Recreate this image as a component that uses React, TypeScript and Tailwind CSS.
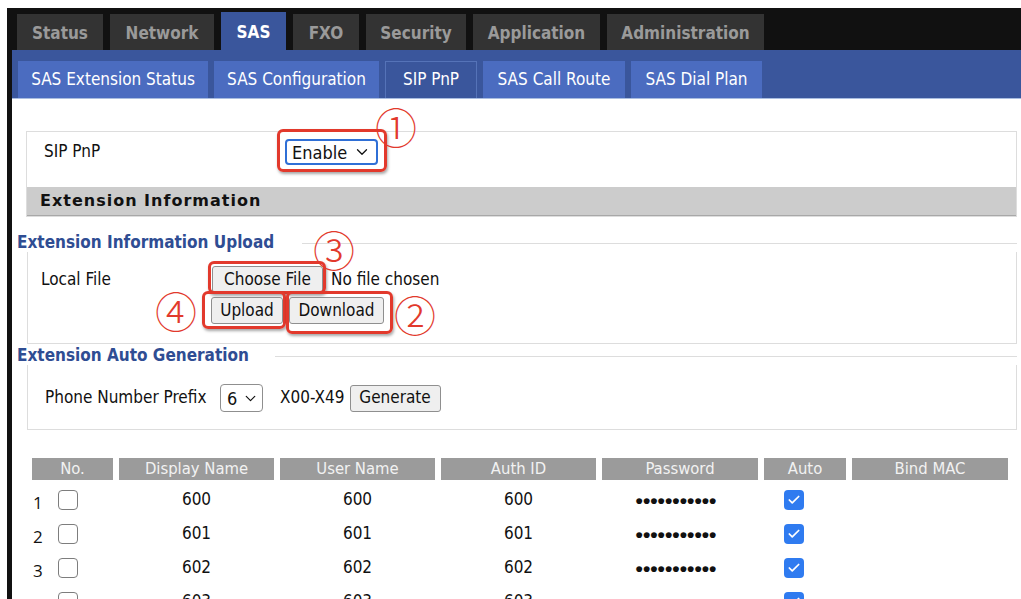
import { ChevronDown, Check } from "lucide-react";

const mainTabs = [
  { label: "Status", w: "w-[86px]" },
  { label: "Network", w: "w-[104px]" },
  { label: "SAS", w: "w-[65px]", active: true },
  { label: "FXO", w: "w-[66px]" },
  { label: "Security", w: "w-[100px]" },
  { label: "Application", w: "w-[127px]" },
  { label: "Administration", w: "w-[157px]" },
];

const subTabs = [
  { label: "SAS Extension Status", w: "w-[190px]" },
  { label: "SAS Configuration", w: "w-[165px]" },
  { label: "SIP PnP", w: "w-[92px]", active: true },
  { label: "SAS Call Route", w: "w-[142px]" },
  { label: "SAS Dial Plan", w: "w-[131px]" },
];

const columns = [
  { label: "No.", w: "w-[81px]" },
  { label: "Display Name", w: "w-[155px]" },
  { label: "User Name", w: "w-[155px]" },
  { label: "Auth ID", w: "w-[155px]" },
  { label: "Password", w: "w-[156px]" },
  { label: "Auto", w: "w-[82px]" },
  { label: "Bind MAC", w: "w-[156px]" },
];

const extensions = ["600", "601", "602", "603"];

const body = "font-['DejaVu_Sans_Condensed','DejaVu_Sans',sans-serif]";

function Marker({ n, className }: { n: string; className: string }) {
  return (
    <span
      className={`absolute leading-none text-[#e2392c] text-[42px] font-['Noto_Sans_CJK_JP',sans-serif] font-light ${className}`}
    >
      {n}
    </span>
  );
}

function Outline({ className }: { className: string }) {
  return (
    <span
      className={`pointer-events-none absolute rounded-[6px] border-[3px] border-[#e2392c] shadow-[1px_2px_3px_rgba(0,0,0,0.35)] ${className}`}
    />
  );
}

function Button({ children, className = "" }: { children: React.ReactNode; className?: string }) {
  return (
    <span
      className={`inline-flex h-[27px] items-center justify-center rounded-[3px] border border-[#8f8f8f] bg-[#efefef] text-[17px] text-[#111] ${className}`}
    >
      {children}
    </span>
  );
}

function SectionTitle({ title, gap }: { title: string; gap: string }) {
  return (
    <div className="flex h-[18px] items-center pl-[5px]">
      <span className={`font-bold text-[17px] text-[#2f4d93] ${gap}`}>{title}</span>
      <span className="h-px flex-1 bg-[#dddddd]" />
    </div>
  );
}

export default function App() {
  return (
    <div className={`h-[599px] w-[1021px] overflow-hidden bg-white pl-[7px] pt-[8px] ${body}`}>
      <div className="h-full bg-[#111111]">
        {/* top navigation */}
        <div className="flex h-[42px] items-end gap-[7px] pl-[10px]">
          {mainTabs.map((t) => (
            <div
              key={t.label}
              className={`flex items-center justify-center pt-[3px] font-bold text-[17px] ${t.w} ${
                t.active ? "h-[38px] bg-[#3a569c] text-white" : "h-[36px] bg-[#333333] text-[#9a9a9a]"
              }`}
            >
              {t.label}
            </div>
          ))}
        </div>

        <div className="ml-[5px] h-full bg-white">
          {/* sub navigation */}
          <div className="flex h-[49px] items-end gap-[6px] border-b border-[#a9bde0] bg-[#3a569c] pl-[6px]">
            {subTabs.map((t) => (
              <div
                key={t.label}
                className={`flex h-[37px] items-center justify-center text-[17px] text-white ${t.w} ${
                  t.active ? "border border-b-0 border-[#5573b8] bg-[#3a569c]" : "bg-[#4b6cc0]"
                }`}
              >
                {t.label}
              </div>
            ))}
          </div>

          {/* SIP PnP switch */}
          <div className="ml-[14px] mt-[32px] w-[991px] border border-[#dddddd]">
            <div className="flex h-[55px] items-start pl-[17px] pt-[7px] text-[17px] text-[#111]">
              <span className="flex h-[26px] w-[241px] items-center">SIP PnP</span>
              <span className="relative">
                <span className="flex h-[26px] w-[93px] items-center justify-between rounded-[4px] border-2 border-[#2f6fd6] pl-[5px] pr-[5px] text-[18px]">
                  Enable
                  <ChevronDown size={18} strokeWidth={1.7} />
                </span>
                <Outline className="-bottom-[7px] -left-[8px] -right-[9px] -top-[10px]" />
                <Marker n="①" className="-right-[39px] -top-[34px]" />
              </span>
            </div>
            <div className="flex h-[29px] items-center border-b border-[#a8a8a8] bg-[#cccccc] pl-[13px] font-['DejaVu_Sans',sans-serif] text-[16px] font-bold tracking-[1px] text-[#111]">
              Extension Information
            </div>
          </div>

          {/* upload */}
          <div className="mt-[17px] w-[1005px]">
            <SectionTitle title="Extension Information Upload" gap="mr-[28px]" />
            <div className="ml-[15px] border-x border-b border-[#dddddd] pb-[19px] pl-[13px] pt-[14px] text-[17px] text-[#111]">
              <div className="flex items-center">
                <span className="w-[171px]">Local File</span>
                <span className="relative">
                  <Button className="w-[111px]">Choose File</Button>
                  <Outline className="-bottom-[1px] -left-[4px] -right-[3px] -top-[5px]" />
                  <Marker n="③" className="-right-[32px] -top-[38px]" />
                </span>
                <span className="ml-[8px]">No file chosen</span>
              </div>
              <div className="mt-[4px] flex items-center pl-[170px]">
                <span className="relative">
                  <Button className="w-[72px]">Upload</Button>
                  <Outline className="-bottom-[5px] -left-[9px] -right-[3px] -top-[6px]" />
                  <Marker n="④" className="-left-[56px] -top-[8px]" />
                </span>
                <span className="relative ml-[6px]">
                  <Button className="w-[95px]">Download</Button>
                  <Outline className="-bottom-[10px] -left-[3px] -right-[9px] -top-[6px]" />
                  <Marker n="②" className="-right-[52px] -top-[4px]" />
                </span>
              </div>
            </div>
          </div>

          {/* auto generation */}
          <div className="mt-[3px] w-[1005px]">
            <SectionTitle title="Extension Auto Generation" gap="mr-[26px]" />
            <div className="ml-[15px] flex items-center border-x border-b border-[#dddddd] pb-[17px] pl-[17px] pt-[19px] text-[17px] text-[#111]">
              <span className="w-[175px]">Phone Number Prefix</span>
              <span className="flex h-[28px] w-[43px] items-center justify-between rounded-[4px] border border-[#8f8f8f] pl-[6px] pr-[3px] text-[18px]">
                6
                <ChevronDown size={17} strokeWidth={1.7} />
              </span>
              <span className="ml-[17px]">X00-X49</span>
              <Button className="ml-[5px] w-[91px]">Generate</Button>
            </div>
          </div>

          {/* extension table */}
          <div className="ml-[20px] mt-[28px]">
            <div className="flex gap-[6px]">
              {columns.map((c) => (
                <div
                  key={c.label}
                  className={`flex h-[22px] items-center justify-center bg-[#9b9b9b] text-[16.5px] text-[#f2f2f2] ${c.w}`}
                >
                  {c.label}
                </div>
              ))}
            </div>
            <div className="mt-[3px]">
              {extensions.map((ext, i) => (
                <div key={ext} className="flex h-[34px] items-center gap-[6px] text-[17px] text-[#111]">
                  <div className="flex w-[81px] items-center">
                    <span className="w-[26px] pl-[1px] pt-[5px] font-['Open_Sans',sans-serif] text-[17px]">{i + 1}</span>
                    <span className="h-[20px] w-[20px] rounded-[4px] border border-[#7d7d7d] bg-white" />
                  </div>
                  <div className="w-[155px] text-center">{ext}</div>
                  <div className="w-[155px] text-center">{ext}</div>
                  <div className="w-[155px] text-center">{ext}</div>
                  <div className="w-[156px] pr-[8px] text-center font-['Liberation_Sans',sans-serif] text-[21px] font-bold leading-none">•••••••••••</div>
                  <div className="w-[82px] pl-[20px]">
                    <span className="flex h-[20px] w-[20px] items-center justify-center rounded-[4px] bg-[#2f7bf0]">
                      <Check size={14} strokeWidth={3} className="text-white" />
                    </span>
                  </div>
                  <div className="w-[156px]" />
                </div>
              ))}
            </div>
          </div>
        </div>
      </div>
    </div>
  );
}
